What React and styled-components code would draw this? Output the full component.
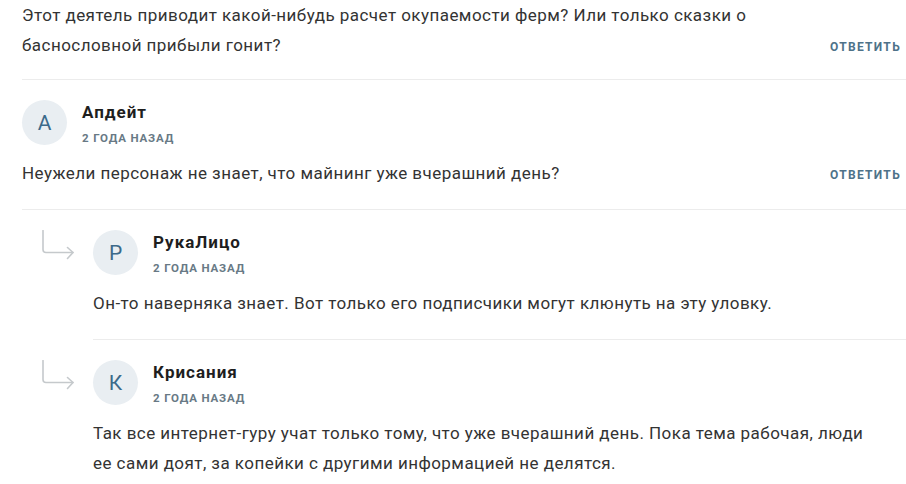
import React from "react";
import styled, { createGlobalStyle } from "styled-components";

const Global = createGlobalStyle`
  html, body { margin: 0; padding: 0; background: #fff; }
  body { font-family: Roboto, "Noto Sans", Arial, sans-serif; color: #333; overflow: hidden; }
`;

const List = styled.div`
  width: 906px;
  padding-left: 22px;
  box-sizing: border-box;
`;

const Item = styled.div`
  padding-top: ${(p) => (p.$first ? "0" : "20px")};
  padding-bottom: ${(p) => (p.$first ? "19px" : "21px")};
  border-bottom: ${(p) => (p.$last ? "none" : "1px solid #ececec")};
`;

const Header = styled.div`
  display: flex;
  align-items: flex-start;
  gap: 15px;
  margin-bottom: 13px;
`;

const Avatar = styled.div`
  width: 45px;
  height: 45px;
  flex: none;
  border-radius: 50%;
  background: #e9eef2;
  color: #3c6a8a;
  display: flex;
  align-items: center;
  justify-content: center;
  font-size: 21px;
  font-weight: 400;
`;

const Meta = styled.div`
  display: flex;
  flex-direction: column;
  padding-top: 2px;
`;

const Name = styled.div`
  font-size: 17px;
  line-height: 20px;
  font-weight: 700;
  letter-spacing: 1px;
  color: #1e1e1e;
`;

const Date = styled.div`
  margin-top: 9px;
  font-size: 11.5px;
  line-height: 14px;
  font-weight: 700;
  letter-spacing: 0.85px;
  color: #687985;
  text-transform: uppercase;
`;

const Body = styled.div`
  display: flex;
  align-items: flex-end;
  padding-right: 5px;
`;

const Text = styled.p`
  margin: 0;
  flex: 1;
  max-width: ${(p) => p.$max || "none"};
  font-size: 17px;
  line-height: 30px;
  letter-spacing: 0.45px;
  color: #333;
`;

const ReplyButton = styled.button`
  flex: none;
  margin-left: 30px;
  margin-bottom: -2px;
  padding: 0;
  border: none;
  background: none;
  font-family: inherit;
  font-size: 12px;
  line-height: 30px;
  font-weight: 700;
  letter-spacing: 1.3px;
  color: #4e7289;
  text-transform: uppercase;
  cursor: pointer;
`;

const Replies = styled.div`
  display: flex;
  flex-direction: column;
`;

const Reply = styled.div`
  display: grid;
  grid-template-columns: 71px 1fr;
`;

const ArrowCell = styled.div`
  padding-top: 20px;
  padding-left: 19px;
`;

const ReplyArrow = () => (
  <svg width="34" height="34" viewBox="0 0 34 34" fill="none">
    <path
      d="M2 0.5 V19.5 Q2 22.5 5 22.5 H32"
      stroke="#c5c9cc"
      strokeWidth="1.6"
      strokeLinecap="round"
    />
    <path
      d="M26.5 17.5 L32 22.5 L26.5 28.5"
      stroke="#c5c9cc"
      strokeWidth="1.6"
      strokeLinecap="round"
      strokeLinejoin="round"
    />
  </svg>
);

function Comment({ first, last, letter, name, date, text, reply, max }) {
  return (
    <Item $first={first} $last={last}>
      {name && (
        <Header>
          <Avatar>{letter}</Avatar>
          <Meta>
            <Name>{name}</Name>
            <Date>{date}</Date>
          </Meta>
        </Header>
      )}
      <Body>
        <Text $max={max}>{text}</Text>
        {reply && <ReplyButton>Ответить</ReplyButton>}
      </Body>
    </Item>
  );
}

export default function App() {
  return (
    <>
      <Global />
      <List>
        <Comment
          first
          reply
          text="Этот деятель приводит какой-нибудь расчет окупаемости ферм? Или только сказки о баснословной прибыли гонит?"
        />
        <Comment
          reply
          letter="А"
          name="Апдейт"
          date="2 года назад"
          text="Неужели персонаж не знает, что майнинг уже вчерашний день?"
        />
        <Replies>
          <Reply>
            <ArrowCell>
              <ReplyArrow />
            </ArrowCell>
            <Comment
              letter="Р"
              name="РукаЛицо"
              date="2 года назад"
              text="Он-то наверняка знает. Вот только его подписчики могут клюнуть на эту уловку."
            />
          </Reply>
          <Reply>
            <ArrowCell>
              <ReplyArrow />
            </ArrowCell>
            <Comment
              last
              max="785px"
              letter="К"
              name="Крисания"
              date="2 года назад"
              text="Так все интернет-гуру учат только тому, что уже вчерашний день. Пока тема рабочая, люди ее сами доят, за копейки с другими информацией не делятся."
            />
          </Reply>
        </Replies>
      </List>
    </>
  );
}
